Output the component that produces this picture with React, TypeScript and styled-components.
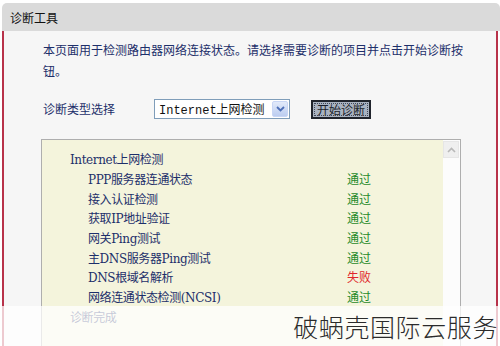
import styled, { createGlobalStyle } from "styled-components";

const GlobalStyle = createGlobalStyle`
  html, body {
    margin: 0;
    padding: 0;
    background: #ffffff;
    overflow: hidden;
  }
  body {
    font-family: "Noto Sans CJK SC", sans-serif;
  }
`;

const cjk = `"Noto Sans CJK SC", sans-serif`;

const Page = styled.div`
  position: relative;
  width: 500px;
  height: 346px;
  overflow: hidden;
  padding-top: 3px;
  box-sizing: border-box;
`;

const Header = styled.div`
  height: 28px;
  margin-left: 2px;
  background: #dadada;
  border-radius: 5px 5px 0 0;
  display: flex;
  align-items: center;
  padding-left: 8px;
  font-size: 12px;
  color: #111;
  font-family: ${cjk};
`;

const Panel = styled.div`
  margin-left: 2px;
  margin-right: 2px;
  border-left: 2px solid #b8324a;
  border-right: 2px solid #b8324a;
  background: #f6f6f6;
  padding: 8px 0 0 39px;
  height: 400px;
`;

const Intro = styled.p`
  margin: 0;
  width: 432px;
  font-size: 12px;
  line-height: 21px;
  color: #1d2f6a;
  font-family: ${cjk};
`;

const TypeRow = styled.div`
  display: flex;
  align-items: center;
  margin-top: 17px;
  height: 22px;
`;

const Label = styled.span`
  width: 111px;
  font-size: 12px;
  color: #1d2f6a;
  font-family: ${cjk};
  margin-top: -2px;
`;

const Select = styled.div`
  width: 136px;
  height: 20px;
  box-sizing: border-box;
  border: 1px solid #7f9db9;
  background: #fff;
  display: flex;
  align-items: center;
  justify-content: space-between;
  padding: 0 1px 0 4px;
  font-family: "Liberation Mono", "Noto Sans CJK SC", monospace;
  font-size: 12px;
  color: #111;
`;

const Arrow = styled.div`
  width: 16px;
  height: 16px;
  background: linear-gradient(#e2eafa, #bccdf0);
  border: 1px solid #c8d6f5;
  box-sizing: border-box;
  border-radius: 2px;
  display: flex;
  align-items: center;
  justify-content: center;
`;

const StartButton = styled.button`
  margin-left: 21px;
  width: 60px;
  height: 19px;
  padding: 0;
  border: 2px solid #20242c;
  background: #a9b2c0;
  font-family: ${cjk};
  font-size: 12px;
  color: #1b1f2a;
  outline: 1px dotted #404858;
  outline-offset: -4px;
  display: flex;
  align-items: center;
  justify-content: center;
`;

const ResultBox = styled.div`
  margin-top: 19px;
  margin-left: -2px;
  width: 420px;
  height: 220px;
  box-sizing: border-box;
  border: 1px solid #aeaeae;
  display: flex;
`;

const ResultList = styled.div`
  flex: 1;
  background: #f4f4dc;
  padding-top: 9px;
  font-family: "DejaVu Serif", "Noto Sans CJK SC", serif;
  font-size: 12px;
  letter-spacing: -0.4px;
  color: #1d2f6a;
`;

const Line = styled.div<{ $indent?: boolean }>`
  display: grid;
  grid-template-columns: 259px auto;
  height: 19.7px;
  align-items: center;
  padding-left: ${(p) => (p.$indent ? "46px" : "28px")};
`;

const Status = styled.span<{ $ok: boolean }>`
  font-family: ${cjk};
  font-size: 12px;
  letter-spacing: 0;
  color: ${(p) => (p.$ok ? "#1f8a2a" : "#e0262a")};
`;

const Scrollbar = styled.div`
  width: 17px;
  background: #fcfcfc;
`;

const ScrollUp = styled.div`
  height: 17px;
  margin: 1px 1px 0 0;
  background: #efefef;
  border: 1px solid #e6e6e6;
  box-sizing: border-box;
  display: flex;
  align-items: center;
  justify-content: center;
`;

const Veil = styled.div`
  position: absolute;
  left: 0;
  right: 0;
  top: 306px;
  bottom: 0;
  background: rgba(255, 255, 255, 0.74);
`;

const Watermark = styled.div`
  position: absolute;
  right: 2px;
  top: 308px;
  font-family: ${cjk};
  font-weight: 300;
  font-size: 25px;
  letter-spacing: 0.6px;
  color: #2b2b2b;
`;

const items: [string, boolean][] = [
  ["PPP服务器连通状态", true],
  ["接入认证检测", true],
  ["获取IP地址验证", true],
  ["网关Ping测试", true],
  ["主DNS服务器Ping测试", true],
  ["DNS根域名解析", false],
  ["网络连通状态检测(NCSI)", true],
];

export default function App() {
  return (
    <Page>
      <GlobalStyle />
      <Header>诊断工具</Header>
      <Panel>
        <Intro>本页面用于检测路由器网络连接状态。请选择需要诊断的项目并点击开始诊断按钮。</Intro>
        <TypeRow>
          <Label>诊断类型选择</Label>
          <Select>
            <span>Internet上网检测</span>
            <Arrow>
              <svg width="9" height="6" viewBox="0 0 9 6">
                <path d="M1 1 L4.5 4.5 L8 1" fill="none" stroke="#4d6fb8" strokeWidth="1.8" />
              </svg>
            </Arrow>
          </Select>
          <StartButton>开始诊断</StartButton>
        </TypeRow>
        <ResultBox>
          <ResultList>
            <Line>Internet上网检测</Line>
            {items.map(([name, ok]) => (
              <Line $indent key={name}>
                <span>{name}</span>
                <Status $ok={ok}>{ok ? "通过" : "失败"}</Status>
              </Line>
            ))}
            <Line>诊断完成</Line>
          </ResultList>
          <Scrollbar>
            <ScrollUp>
              <svg width="9" height="6" viewBox="0 0 9 6">
                <path d="M1 5 L4.5 1.5 L8 5" fill="none" stroke="#b8b8b8" strokeWidth="1.6" />
              </svg>
            </ScrollUp>
          </Scrollbar>
        </ResultBox>
      </Panel>
      <Veil />
      <Watermark>破蜗壳国际云服务</Watermark>
    </Page>
  );
}
